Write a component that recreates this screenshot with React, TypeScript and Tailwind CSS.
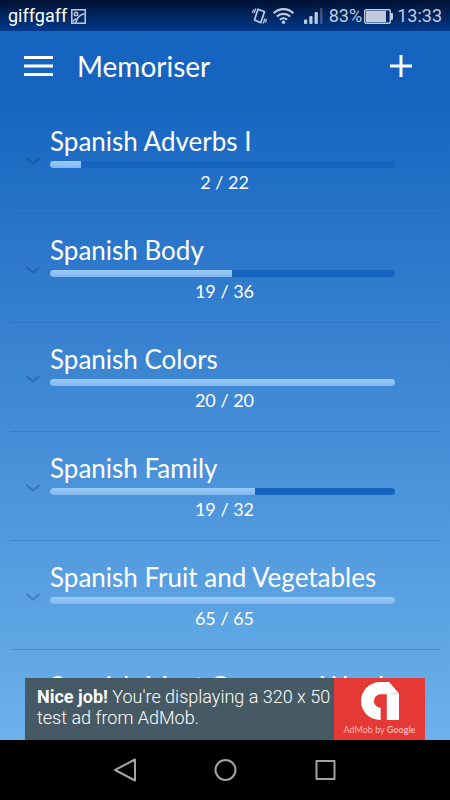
import type { ReactNode } from 'react';

type Deck = {
  title: string;
  learned: number;
  total: number;
};

const decks: Deck[] = [
  { title: 'Spanish Adverbs I', learned: 2, total: 22 },
  { title: 'Spanish Body', learned: 19, total: 36 },
  { title: 'Spanish Colors', learned: 20, total: 20 },
  { title: 'Spanish Family', learned: 19, total: 32 },
  { title: 'Spanish Fruit and Vegetables', learned: 65, total: 65 },
  { title: 'Spanish Most Common Words', learned: 0, total: 100 },
];

const StatusBar = () => (
  <div className="flex h-[31px] shrink-0 items-center justify-between bg-linear-to-b from-[#001233] to-[#003a8c] px-2 pt-px font-['Roboto',sans-serif] text-lg leading-6 text-[#c0cbe0]">
    <div className="flex items-center gap-1">
      <span className="text-white">giffgaff</span>
      <svg className="h-[15px] w-[15px]" viewBox="0 0 15 15" fill="none" stroke="#b9c4da" strokeWidth="1.6">
        <rect x="0.8" y="0.8" width="13.4" height="13.4" />
        <circle cx="5" cy="5" r="1.7" />
        <path d="M1.500 12.500L4.500 10l1.300 1C7 8 9.500 5.500 13.500 4.800M5.800 11l-1.300 3" />
      </svg>
    </div>
    <div className="flex items-center">
      <svg className="mr-1.5 h-4 w-[15px]" viewBox="0 0 15 16" fill="none" stroke="#c0cbe0">
        <path d="M6 1.200l6.500 2.600-3.700 11L2.500 12z" strokeWidth="1.700" strokeLinejoin="round" />
        <path d="M3.800.5L2.200 5M1.600 1.500L.4 5M14.600 11l-1.300 3.500M12.900 10.500l-1.600 5" strokeWidth="1.200" />
      </svg>
      <svg className="mr-2.5 h-4 w-[21px]" viewBox="0 0 21 16" fill="none" stroke="#c0cbe0" strokeWidth="2.2">
        <path d="M.7 5.200C6.300-.2 14.700-.2 20.300 5.200M3.800 8.500c3.900-3.500 9.500-3.500 13.400 0M6.900 11.700c2.100-1.900 5.100-1.900 7.200 0" />
        <circle cx="10.500" cy="14.200" r="1.700" fill="#c0cbe0" stroke="none" />
      </svg>
      <svg className="mr-1.5 h-4 w-[19px]" viewBox="0 0 19 16" fill="#c0cbe0">
        <rect x="0" y="11.500" width="3.200" height="4.500" rx="1" />
        <rect x="5.300" y="8" width="3.200" height="8" rx="1" />
        <rect x="10.600" y="4" width="3.200" height="12" rx="1" />
        <rect x="16" y="0" width="2.600" height="16" rx="1" opacity="0.3" />
      </svg>
      <span>83%</span>
      <svg className="mr-1 ml-0.5 h-[15px] w-[29px]" viewBox="0 0 29 15" fill="none">
        <rect x="0.700" y="0.700" width="25.600" height="13.600" rx="1.500" stroke="#c0cbe0" strokeWidth="1.400" />
        <rect x="2" y="2" width="20" height="11" fill="#c0cbe0" />
        <rect x="26.500" y="4" width="2.500" height="7" rx="1" fill="#c0cbe0" />
      </svg>
      <span>13:33</span>
    </div>
  </div>
);

const Header = () => (
  <header className="flex h-[70px] shrink-0 items-center px-6 text-white">
    <button type="button" aria-label="Menu" className="mr-6">
      <svg className="h-5 w-[29px]" viewBox="0 0 29 20" fill="currentColor">
        <path d="M0 0h29v3H0zM0 8.500h29v3H0zM0 17h29v3H0z" />
      </svg>
    </button>
    <h1 className="flex-1 text-[28px] leading-9">Memoriser</h1>
    <button type="button" aria-label="Add deck" className="mr-3.5">
      <svg className="h-[22px] w-[22px]" viewBox="0 0 22 22" fill="currentColor">
        <path d="M9.500 0h3v9.500H22v3h-9.500V22h-3v-9.500H0v-3h9.500z" />
      </svg>
    </button>
  </header>
);

const DeckRow = ({ title, learned, total }: Deck) => (
  <li className="flex h-[109px] shrink-0 border-b border-[#1f5fa8]/30 pt-5">
    <button type="button" aria-label={`Expand ${title}`} className="mt-8 mr-2.5 ml-4 h-2 w-3.5 text-[#0d3c78]/35">
      <svg className="h-2 w-3.5" viewBox="0 0 14 8" fill="none" stroke="currentColor" strokeWidth="2">
        <path d="M0.500 1L7 6.500 13.500 1" />
      </svg>
    </button>
    <div className="mr-[45px] min-w-0 flex-1">
      <h2 className="text-[26px] leading-8 whitespace-nowrap text-white">{title}</h2>
      <div
        role="progressbar"
        aria-label={title}
        aria-valuenow={learned}
        aria-valuemax={total}
        className="mt-1 h-[7px] overflow-hidden rounded-full bg-[#1565c0]"
      >
        <div
          className="h-full bg-linear-to-b from-[#9accf8] to-[#82b6ef]"
          style={{ width: `${(learned / total) * 100}%` }}
        />
      </div>
      <p className="mt-0.5 pl-1 text-center text-lg leading-6 text-white">
        {learned} / {total}
      </p>
    </div>
  </li>
);

const AdBanner = () => (
  <a
    href="#ad"
    className="absolute inset-x-[25px] bottom-0 flex h-[62px] bg-[#455a64] font-['Roboto',sans-serif]"
  >
    <p className="flex-1 pt-2 pl-3 text-lg leading-[21px] font-light text-white">
      <b className="font-bold">Nice job!</b> You're displaying a 320 x 50 test ad from AdMob.
    </p>
    <div className="flex w-[91px] shrink-0 flex-col items-center bg-[#e53935] pt-1">
      <svg className="h-[38px] w-[38px]" viewBox="0 0 112 112">
        <path d="M83 0H56a56 56 0 0 0 0 112h2V76a20 20 0 0 1 0-40h18v76h36V34z" fill="#fff" />
        <path d="M76 36h36v-2L108 30z" fill="#ddd" />
      </svg>
      <span className="mt-0.5 font-['Lato',sans-serif] text-[9px] leading-4 text-[#f8b5b3]">
        AdMob by <b className="font-bold">Google</b>
      </span>
    </div>
  </a>
);

const NavButton = ({ label, children }: { label: string; children: ReactNode }) => (
  <button type="button" aria-label={label}>
    <svg className="h-6 w-6" viewBox="0 0 24 24" fill="none" stroke="#a3a3a3" strokeWidth="2" strokeLinejoin="round">
      {children}
    </svg>
  </button>
);

const App = () => {
  return (
    <div className="flex h-screen flex-col overflow-hidden bg-black font-['Lato',sans-serif]">
      <StatusBar />
      <main className="relative flex min-h-0 flex-1 flex-col bg-linear-to-b from-[#1565c0] from-10% to-[#6cb2eb]">
        <Header />
        <ul className="mx-2.5 mt-1 flex min-h-0 flex-1 flex-col overflow-hidden">
          {decks.map((deck) => (
            <DeckRow key={deck.title} {...deck} />
          ))}
        </ul>
        <AdBanner />
      </main>
      <nav className="flex h-[60px] shrink-0 items-center justify-center gap-[76px]">
        <NavButton label="Back">
          <path d="M22 1.500v21L2 12z" />
        </NavButton>
        <NavButton label="Home">
          <circle cx="12.500" cy="12" r="10" />
        </NavButton>
        <NavButton label="Recent apps">
          <rect x="3.500" y="3" width="18" height="18" />
        </NavButton>
      </nav>
    </div>
  );
};

export default App;
